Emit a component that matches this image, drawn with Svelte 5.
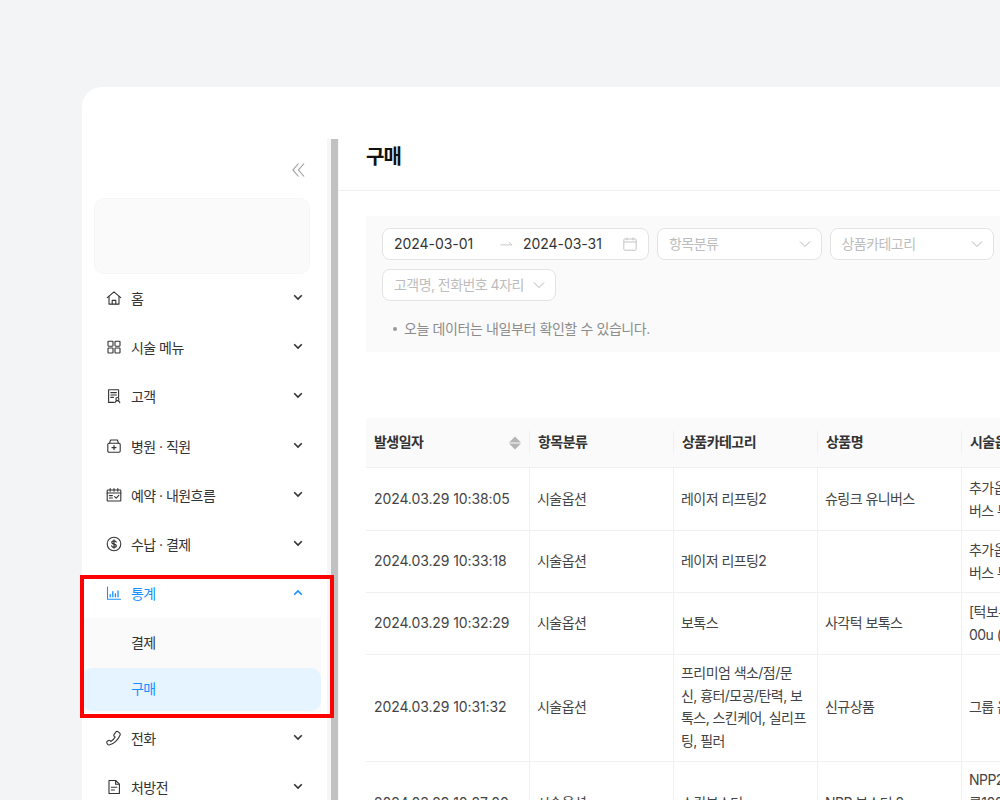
<script>
  const beforeItems = [
    { label: '홈', icon: 'home' },
    { label: '시술 메뉴', icon: 'grid' },
    { label: '고객', icon: 'customer' },
    { label: '병원 · 직원', icon: 'hospital' },
    { label: '예약 · 내원흐름', icon: 'calendar' },
    { label: '수납 · 결제', icon: 'dollar' }
  ];
  const afterItems = [
    { label: '전화', icon: 'phone' },
    { label: '처방전', icon: 'doc' }
  ];
  const rows = [
    { date: '2024.03.29 10:38:05', type: '시술옵션', cat: ['레이저 리프팅2'], name: '슈링크 유니버스', opt: ['추가옵션 유니', '버스 부스터'] },
    { date: '2024.03.29 10:33:18', type: '시술옵션', cat: ['레이저 리프팅2'], name: '', opt: ['추가옵션 유니', '버스 부스터'] },
    { date: '2024.03.29 10:32:29', type: '시술옵션', cat: ['보톡스'], name: '사각턱 보톡스', opt: ['[턱보톡스] 1', '00u (국산)'] },
    { date: '2024.03.29 10:31:32', type: '시술옵션', cat: ['프리미엄 색소/점/문', '신, 흉터/모공/탄력, 보', '톡스, 스킨케어, 실리프', '팅, 필러'], name: '신규상품', opt: ['그룹 옵션'] },
    { date: '2024.03.29 10:27:00', type: '시술옵션', cat: ['스킨부스터'], name: 'NPP 부스터 2', opt: ['NPP2 부스터', '콜100', '추가'] }
  ];
</script>

{#snippet icon(name)}
  <svg class="ico" viewBox="0 0 16 16" fill="none" stroke="currentColor" stroke-width="1.1" stroke-linejoin="round" stroke-linecap="round">
    {#if name === 'home'}
      <path d="M1.3 7.6 8 1.8l6.7 5.8" />
      <path d="M3 6.4v7.7h10V6.4" />
      <path d="M6.2 14v-3.6h3.6V14" />
    {:else if name === 'grid'}
      <rect x="2" y="2.2" width="5" height="5" rx=".6" />
      <rect x="9" y="2.2" width="5" height="5" rx=".6" />
      <rect x="2" y="9" width="5" height="5" rx=".6" />
      <rect x="9" y="9" width="5" height="5" rx=".6" />
    {:else if name === 'customer'}
      <path d="M8 14.4H2.6V1.8h10v7.4" />
      <path d="M4.8 4.6h5.6M4.8 7h5.6M4.8 9.4h2.6" />
      <circle cx="11.4" cy="11" r="1.5" />
      <path d="M9 14.6c.3-1.3 1.2-2 2.4-2s2.1.7 2.4 2" />
    {:else if name === 'hospital'}
      <path d="M3.6 5.2 4.6 2h6.8l1 3.2" />
      <rect x="1.8" y="5.2" width="12.4" height="9" rx="1.2" />
      <path d="M8 7.6v4M6 9.6h4" stroke-width="1.2" />
    {:else if name === 'calendar'}
      <rect x="1.2" y="3" width="13.6" height="11" rx=".6" />
      <path d="M4.2 1.6v2.6M8 1.6v2.6M11.8 1.6v2.6" />
      <path d="M1.2 6h13.6M3.4 8.6h3M3.4 11h3M8.6 9.6l1.6 1.6 2.6-2.8" />
    {:else if name === 'dollar'}
      <circle cx="8" cy="8" r="6.8" />
      <path d="M10.2 6.2C10 5.2 9.1 4.8 8 4.8c-1.3 0-2.2.6-2.2 1.6 0 2.3 4.5 1 4.5 3.3 0 1-1 1.6-2.3 1.6-1.2 0-2.1-.5-2.3-1.5M8 3.8v8.4" stroke-width="1.2" />
    {:else if name === 'chart'}
      <path d="M1.5 2v12.2h13" />
      <path d="M4.2 11.8V9.6M6.8 11.8V6.6M9.4 11.8V9M12 11.8V5.8" stroke-width="1.3" />
    {:else if name === 'phone'}
      <path d="M10 1.8c.8-.6 1.5-.5 2.3.1l1.2 1c.8.7.9 1.4.5 2.3-1 2.4-2.6 4.7-4.5 6.5-1.9 1.8-4.2 3-6.4 3.3-.9.1-1.5-.3-1.8-1.1l-.4-1c-.3-.8 0-1.5.7-1.9l.9-.5c.7-.4 1.3-.3 1.8.3l.5.6c1.7-.8 3.3-2.3 4.3-4.4l-.8-.6c-.6-.5-.7-1.1-.3-1.8z" />
    {:else if name === 'doc'}
      <path d="M9.6 1.500H3v13h10.400V5.200z" />
      <path d="M9.6 1.500v3.700h3.800M5.400 8.200h5.400M5.400 11h3" />
    {/if}
  </svg>
{/snippet}

{#snippet chevron(up)}
  <svg class="chev" class:up viewBox="0 0 10 10" fill="none" stroke="currentColor" stroke-width="1.6">
    <path d="M1.2 3.2 5 7l3.800-3.800" />
  </svg>
{/snippet}

{#snippet menuItem(item)}
  <div class="item">
    {@render icon(item.icon)}
    <span class="label">{item.label}</span>
    {@render chevron(false)}
  </div>
{/snippet}

<div class="page">
  <div class="card">
    <div class="topgap"></div>
    <div class="layout">
      <aside class="sidebar">
        <div class="collapse">
          <svg viewBox="0 0 14 16" fill="none" stroke="currentColor" stroke-width="1.2">
            <path d="M7 1 1 8l6 7M13 1 7 8l6 7" />
          </svg>
        </div>
        <div class="logo"></div>
        <nav>
          {#each beforeItems as item}
            {@render menuItem(item)}
          {/each}
          <div class="item active">
            {@render icon('chart')}
            <span class="label">통계</span>
            {@render chevron(true)}
          </div>
          <div class="sub">
            <div class="subitem">결제</div>
            <div class="subitem current">구매</div>
          </div>
          {#each afterItems as item}
            {@render menuItem(item)}
          {/each}
        </nav>
      </aside>

      <div class="scrolltrack"><div class="thumb"></div></div>

      <main>
        <header><h1>구매</h1></header>
        <div class="content">
          <section class="filter">
            <div class="controls">
              <div class="field range">
                <span class="date">2024-03-01</span>
                <svg class="arrow" viewBox="0 0 14 8" fill="none" stroke="currentColor" stroke-width="1">
                  <path d="M.5 5h12.500L9.500 2" />
                </svg>
                <span class="date">2024-03-31</span>
                <svg class="cal" viewBox="0 0 14 14" fill="none" stroke="currentColor" stroke-width="1">
                  <rect x=".8" y="2" width="12.400" height="11.200" rx=".8" />
                  <path d="M.8 5h12.400M4 .5v2.800M10 .5v2.800" />
                </svg>
              </div>
              <div class="field select wide"><span>항목분류</span>
                <svg viewBox="0 0 12 8" fill="none" stroke="currentColor" stroke-width="1"><path d="m1 1.500 5 5 5-5" /></svg>
              </div>
              <div class="field select wide"><span>상품카테고리</span>
                <svg viewBox="0 0 12 8" fill="none" stroke="currentColor" stroke-width="1"><path d="m1 1.500 5 5 5-5" /></svg>
              </div>
              <div class="field select"><span>고객명, 전화번호 4자리</span>
                <svg viewBox="0 0 12 8" fill="none" stroke="currentColor" stroke-width="1"><path d="m1 1.500 5 5 5-5" /></svg>
              </div>
            </div>
            <ul class="notes"><li>오늘 데이터는 내일부터 확인할 수 있습니다.</li></ul>
          </section>

          <table>
            <colgroup>
              <col class="c1" /><col class="c2" /><col class="c2" /><col class="c2" /><col class="c5" />
            </colgroup>
            <thead>
              <tr>
                <th>
                  <div class="th-sort">발생일자
                    <svg viewBox="0 0 12 14" fill="#b5b5b5"><path d="M6 .5 12 6.500H0zM6 13.500 0 7.500h12z" /></svg>
                  </div>
                </th>
                <th>항목분류</th>
                <th>상품카테고리</th>
                <th>상품명</th>
                <th>시술옵션명</th>
              </tr>
            </thead>
            <tbody>
              {#each rows as row}
                <tr>
                  <td class="num">{row.date}</td>
                  <td>{row.type}</td>
                  <td>{#each row.cat as line, i}{#if i > 0}<br />{/if}{line}{/each}</td>
                  <td>{row.name}</td>
                  <td>{#each row.opt as line, i}{#if i > 0}<br />{/if}{line}{/each}</td>
                </tr>
              {/each}
            </tbody>
          </table>
        </div>
      </main>
    </div>
  </div>
  <div class="highlight"></div>
</div>

<style>
  :global(body) {
    margin: 0;
    background: #f3f4f6;
    overflow: hidden;
    font-family: Inter, "Noto Sans CJK KR", sans-serif;
  }
  .page {
    position: relative;
    height: 800px;
    overflow: hidden;
    box-sizing: border-box;
    padding: 87px 0 0 82px;
  }
  .card {
    height: 713px;
    background: #fff;
    border-radius: 20px 0 0 0;
    overflow: hidden;
    color: #333;
    font-size: 14px;
  }
  .topgap { height: 52px; }
  .layout { display: flex; height: 661px; }

  .sidebar { width: 245px; flex: none; }
  .collapse {
    height: 59px;
    box-sizing: border-box;
    padding: 23px 22px 0 0;
    display: flex;
    justify-content: flex-end;
    color: #9a9a9a;
  }
  .collapse svg { width: 13px; height: 16px; }
  .logo {
    box-sizing: border-box;
    height: 76px;
    margin: 0 17px 0 12px;
    background: #fafafa;
    border: 1px solid #f6f6f6;
    border-radius: 10px;
  }
  nav { margin-top: -0.5px; letter-spacing: -0.55px; }
  .item {
    height: 49.200px;
    display: flex;
    align-items: center;
    padding: 0 24px 0 24px;
    color: #333;
  }
  .item .label { margin-left: 9px; flex: 1; }
  .item.active { color: #1890ff; }
  .ico { width: 16px; height: 16px; flex: none; }
  .chev { width: 10px; height: 10px; flex: none; margin-top: -2px; }
  .chev.up { transform: rotate(180deg); margin-top: 0; }
  .sub {
    margin: 0 6px 0 0;
    padding: 4.400px 0 2.500px;
    background: #fafafa;
    display: flex;
    flex-direction: column;
    gap: 2.500px;
  }
  .subitem {
    height: 43px;
    line-height: 42px;
    padding-left: 49px;
    border-radius: 10px;
  }
  .subitem.current { background: #e6f4ff; color: #1890ff; }
  .highlight {
    position: absolute;
    left: 80px;
    top: 575px;
    width: 254px;
    height: 143px;
    box-sizing: border-box;
    border: 4px solid #f00;
    pointer-events: none;
  }

  .scrolltrack {
    width: 12px;
    flex: none;
    box-sizing: border-box;
    padding: 0 1px 0 4px;
    background: #f6f6f6;
  }
  .thumb { height: 100%; background: #c1c1c1; }

  main { flex: 1; min-width: 0; }
  header {
    box-sizing: border-box;
    height: 52px;
    padding: 3px 0 0 27px;
    border-bottom: 1px solid #f0f0f0;
  }
  h1 {
    margin: 0;
    font-size: 20px;
    line-height: 30px;
    font-weight: 700;
    color: #111;
    letter-spacing: -1px;
  }
  .content { padding: 25px 0 0 27px; }

  .filter {
    box-sizing: border-box;
    height: 135.500px;
    padding: 12px 0 0 16px;
    background: #fafafa;
  }
  .controls { display: flex; flex-wrap: wrap; gap: 9px 8px; }
  .field {
    box-sizing: border-box;
    height: 32px;
    display: flex;
    align-items: center;
    background: #fff;
    border: 1px solid #e3e3e3;
    border-radius: 8px;
    padding: 0 10px 0 11px;
  }
  .field span { padding-bottom: 2px; }
  .range { width: 267px; color: #333; }
  .date { width: 87px; letter-spacing: -0.05px; }
  .arrow { width: 13px; height: 8px; margin: 0 10px 0 19px; color: #c4c4c4; flex: none; }
  .cal { width: 14px; height: 14px; margin: 0 1px 0 auto; color: #c4c4c4; flex: none; }
  .select { color: #bdbdbd; gap: 9px; letter-spacing: -0.55px; justify-content: space-between; }
  .select.wide { width: 164.500px; }
  .select svg { width: 12px; height: 8px; color: #b5b5b5; flex: none; }
  .notes {
    list-style: none;
    margin: 17px 0 0;
    padding: 0 0 0 11px;
    color: #8c8c8c;
    font-size: 14px;
    line-height: 22px;
    letter-spacing: -0.4px;
  }
  .notes li { display: flex; align-items: center; gap: 7px; }
  .notes li::before {
    content: "";
    width: 4px;
    height: 4px;
    border-radius: 50%;
    background: #999;
    flex: none;
  }

  table {
    margin-top: 66.500px;
    width: 900px;
    table-layout: fixed;
    border-collapse: separate;
    border-spacing: 0;
    line-height: 22.500px;
    letter-spacing: -0.55px;
  }
  .c1 { width: 164px; }
  .c2 { width: 144px; }
  .c5 { width: 304px; }
  th {
    position: relative;
    height: 50px;
    box-sizing: border-box;
    padding: 0 8px;
    background: #fafafa;
    border-bottom: 1px solid #f0f0f0;
    text-align: left;
    font-weight: 600;
    color: #333;
  }
  th:not(:last-child)::after {
    content: "";
    position: absolute;
    right: 0;
    top: 13px;
    height: 22px;
    width: 1px;
    background: #f0f0f0;
  }
  .th-sort { display: flex; align-items: center; justify-content: space-between; padding-right: 1px; }
  .th-sort svg { width: 12px; height: 14px; flex: none; }
  td {
    padding: 8px 8px 8px 7px;
    border-bottom: 1px solid #f0f0f0;
    vertical-align: middle;
    color: #444;
    white-space: nowrap;
  }
  tr:first-child td { padding-top: 9px; }
  tr:nth-child(n+4) td { padding-top: 7px; padding-bottom: 9px; }
  td:not(:last-child) { border-right: 1px solid #f0f0f0; }
  td.num { letter-spacing: -0.1px; padding-left: 8px; }
</style>
